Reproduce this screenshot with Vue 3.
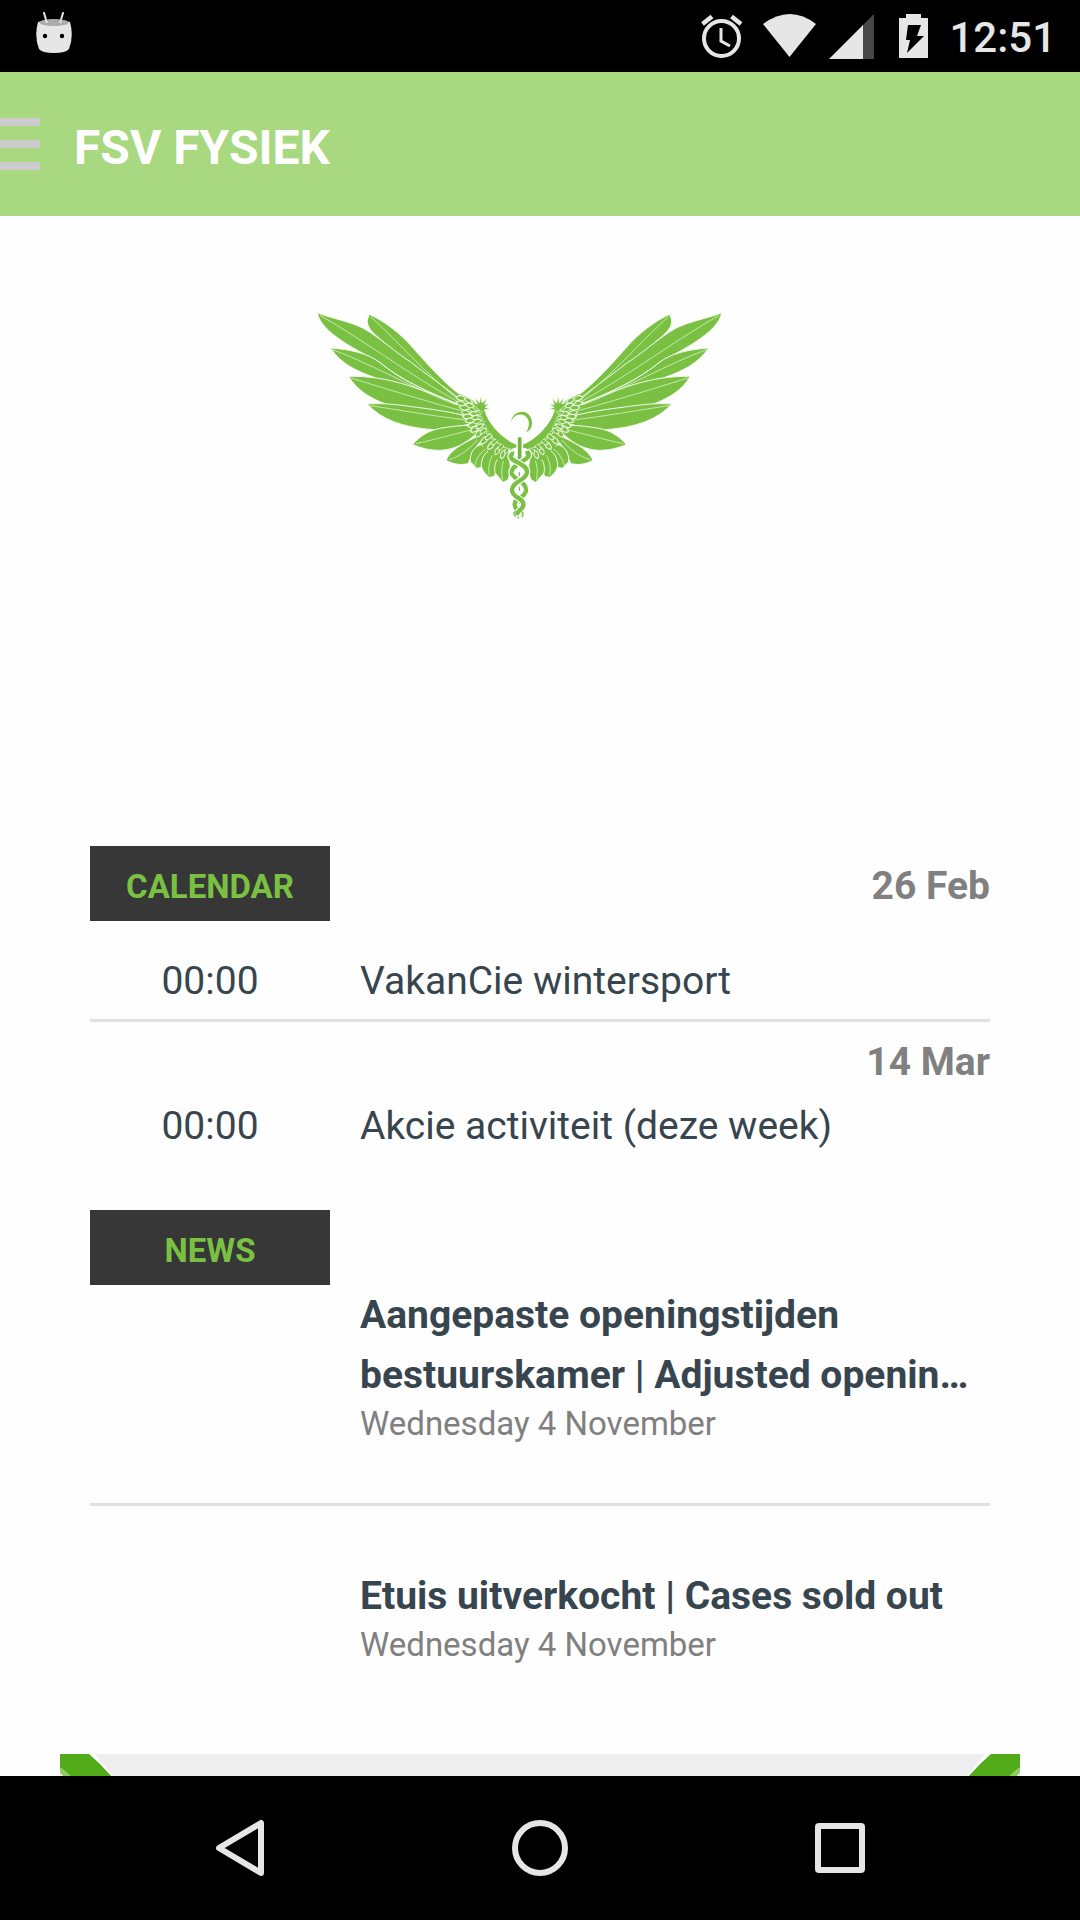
<template>
  <div class="screen">
    <header class="status-bar">
      <svg class="android-icon" width="36" height="42" viewBox="0 0 36 42" aria-hidden="true">
        <path d="M8 1l3 10M27 1l-3 10" stroke="#e6e6e6" stroke-width="2" stroke-linecap="round" />
        <path d="M2 10Q18 5 34 10Q38 24 33 37Q30 41 18 41Q6 41 3 37Q-2 24 2 10Z" fill="#e6e6e6" />
        <ellipse cx="18" cy="10.500" rx="14.500" ry="3.600" fill="#aaa" />
        <path d="M10 8l1 3M25 8l-1 3" stroke="#e6e6e6" stroke-width="2" />
        <circle cx="9" cy="24" r="2.200" />
        <circle cx="26" cy="24" r="2.200" />
      </svg>
      <div class="status-icons">
        <svg width="42" height="48" viewBox="0 0 42 48" fill="none" stroke="#e6e6e6" aria-hidden="true">
          <circle cx="20.500" cy="26.500" r="17.500" stroke-width="4" />
          <path d="M1.500 12L11 4.500M40 12L30.500 4.500" stroke-width="4.500" />
          <path d="M20 16v13l9 5" stroke-width="3" />
        </svg>
        <svg class="wifi" width="54" height="48" viewBox="0 0 54 48" aria-hidden="true">
          <path d="M0 12Q27-8 53 12L26.500 45Z" fill="#e6e6e6" />
        </svg>
        <svg class="signal" width="46" height="48" viewBox="0 0 46 48" aria-hidden="true">
          <path d="M45 2v45H33V14Z" fill="#484848" />
          <path d="M34 13v34H0Z" fill="#e6e6e6" />
        </svg>
        <svg class="battery" width="30" height="48" viewBox="0 0 30 48" aria-hidden="true">
          <path d="M7 2h15v4h7v40H0V6h7Z" fill="#e6e6e6" />
          <path d="M9 13h13l-4 11h7L8 41l3-13H7Z" fill="#000" />
        </svg>
        <span class="clock">12:51</span>
      </div>
    </header>

    <div class="toolbar">
      <button class="menu-button" type="button" aria-label="Menu">
        <span></span>
        <span></span>
        <span></span>
      </button>
      <h1 class="title">FSV FYSIEK</h1>
    </div>

    <main class="content">
      <div class="logo">
        <svg width="439" height="240" viewBox="0 0 1317 720" role="img" aria-label="FSV Fysiek">
          <defs>
            <g id="wing">
              <g fill="#7ac143" stroke="#f4fbee" stroke-width="3">
                <path d="M208 73C250 92 300 128 340 175C390 232 440 285 480 314L466 326C390 285 310 215 250 155C218 130 196 108 203 86Z" />
                <path d="M52 68C90 84 150 94 190 115C240 143 290 190 335 218C390 262 440 295 472 322L468 340C390 310 300 268 240 218C180 184 62 130 52 68Z" />
                <path d="M91 174C150 178 205 190 240 218C300 268 380 305 470 341L474 350C400 330 290 300 225 263C160 240 122 218 91 174Z" />
                <path d="M146 259C200 258 260 265 330 288C380 305 430 325 480 347L490 376C420 362 320 350 262 344C210 325 170 300 146 259Z" />
                <path d="M202 342C250 338 300 345 350 352C400 358 450 366 490 376L508 402C470 412 430 420 398 419C310 412 245 390 202 342Z" />
                <path d="M338 463C365 434 385 423 420 415C450 410 480 406 508 406L524 435C495 462 460 480 420 481C388 481 360 474 338 463Z" />
                <path d="M438 511C450 484 480 464 527 442L540 455C524 475 515 500 504 521C480 526 460 523 438 511Z" />
                <path d="M511 515C509 488 522 472 541 464L575 480C565 508 552 534 530 535Z" />
                <path d="M544 527C544 504 555 487 570 480L594 495C592 524 588 552 582 559L568 562C555 552 546 540 544 527Z" />
                <path d="M585 549C581 526 588 510 600 500L627 505C634 530 630 558 623 570L610 577Z" />
              </g>
              <path
                d="M212 80C300 160 370 245 468 323M60 76C190 150 330 255 468 332M98 179C210 220 350 300 470 345M153 264C270 300 400 340 484 362M211 347C300 360 410 380 500 390M347 461C400 450 470 430 514 420M447 509C480 500 510 475 532 450M524 528C528 505 544 485 558 476M568 555C562 530 572 500 584 488M608 568C602 545 606 520 614 506"
                fill="none"
                stroke="#e2f5d3"
                stroke-width="2.200"
              />
              <!-- covert feathers between the long ones and the inner edge -->
              <path d="M478 312L512 326L552 362Q578 430 652 468L652 505L600 515L560 480L532 450L505 402L486 370L466 326Z" fill="#7ac143" />
              <g fill="#7ac143" stroke="#edf9e3" stroke-width="3.400">
                <path
                  v-for="(c, i) in coverts"
                  :key="i"
                  d="M0 0C6-10 22-10 31 0C22 9 6 9 0 0Z"
                  :transform="`translate(${c[0]} ${c[1]}) rotate(${c[2]}) scale(${c[3]})`"
                />
              </g>
              <path d="M528 352l-16-16 20 6-8-20 15 17 2-20 6 20 13-14-6 19 14-3-13 11 14 5-17 3 6 12-16-8Z" fill="#7ac143" stroke="#f4fbee" stroke-width="2" />
              <path d="M553 362C567 412 604 452 660 467V485C600 472 561 432 546 372Z" fill="#7ac143" />
            </g>
          </defs>
          <use href="#wing" />
          <use href="#wing" transform="translate(1317 0) scale(-1 1)" />
          <path d="M633 395C639 357 692 354 696 396C697 411 690 422 678 427C691 409 691 380 667 374C650 370 638 382 633 395Z" fill="#7ac143" />
          <path d="M625 482Q659 462 693 482L680 560H638Z" fill="#fff" />
          <path d="M659 442V516M659 548v12M659 590v12M659 628v12" stroke="#fff" stroke-width="20" fill="none" />
          <path d="M659 442V518" stroke="#6fb63b" stroke-width="11" fill="none" />
          <path d="M658 545v14M658 590v12M658 628v14" stroke="#8faf9b" stroke-width="4" fill="none" />
          <g fill="none" stroke-linecap="round">
            <g v-for="(s, i) in snakes" :key="i">
              <path :d="s" stroke="#fff" stroke-width="20" />
              <path :d="s" stroke="#7ac143" stroke-width="13" />
            </g>
            <path d="M640 487Q628 505 646 514M678 487Q690 505 672 514" stroke="#7ac143" stroke-width="6" />
            <path d="M646 664q-8 8 0 14M664 664q9 7 2 16M655 681v3" stroke="#8dcb60" stroke-width="5" />
          </g>
        </svg>
      </div>

      <section class="calendar">
        <div v-for="(day, i) in days" :key="day.date" class="day">
          <div class="day-head">
            <h2 v-if="i === 0" class="tag">CALENDAR</h2>
            <span class="date">{{ day.date }}</span>
          </div>
          <div class="event">
            <span class="time">{{ day.time }}</span>
            <span class="name">{{ day.name }}</span>
          </div>
        </div>
      </section>

      <section class="news">
        <h2 class="tag">NEWS</h2>
        <article v-for="item in news" :key="item.title" class="news-item">
          <h3 class="news-title">{{ item.title }}</h3>
          <p class="news-date">{{ item.date }}</p>
        </article>
      </section>

      <div class="banner">
        <svg v-for="side in ['left', 'right']" :key="side" :class="side" width="60" height="60" viewBox="0 0 60 60" aria-hidden="true">
          <path d="M26 0h9L62 34 56 26Z" fill="#fff" />
          <path d="M0 0H29Q41 10 52 23L78 60H40L0 18Z" fill="#52ab18" />
          <path d="M0 15l10 9" stroke="#8fce62" stroke-width="4" />
        </svg>
      </div>
    </main>

    <nav class="nav-bar">
      <button type="button" aria-label="Back">
        <svg width="60" height="60" viewBox="0 0 60 60">
          <path d="M9 30L51 5V55Z" />
        </svg>
      </button>
      <button type="button" aria-label="Home">
        <svg width="60" height="60" viewBox="0 0 60 60">
          <circle cx="30" cy="30" r="25" />
        </svg>
      </button>
      <button type="button" aria-label="Recent apps">
        <svg width="60" height="60" viewBox="0 0 60 60">
          <rect x="8" y="8" width="44" height="44" rx="1" />
        </svg>
      </button>
    </nav>
  </div>
</template>

<script setup>
import { ref } from 'vue';

const days = ref([
  { date: '26 Feb', time: '00:00', name: 'VakanCie wintersport' },
  { date: '14 Mar', time: '00:00', name: 'Akcie activiteit (deze week)' }
]);

const news = ref([
  {
    title: 'Aangepaste openingstijden bestuurskamer | Adjusted openin…',
    date: 'Wednesday 4 November'
  },
  { title: 'Etuis uitverkocht | Cases sold out', date: 'Wednesday 4 November' }
]);

// x, y, rotation, scale of each small feather in the wing
const coverts = [
  [468, 322, 10, 1], [470, 337, 15, 0.9], [478, 352, 5, 1], [484, 366, 10, 0.9],
  [488, 380, 0, 1], [496, 394, -10, 1], [504, 410, -20, 1], [512, 425, -30, 1],
  [526, 440, -40, 1], [542, 462, -45, 1], [564, 478, -50, 1], [586, 494, -60, 0.9],
  [604, 506, -70, 0.9], [494, 325, 30, 0.9], [498, 342, 25, 0.9], [506, 356, 15, 0.8],
  [510, 370, 5, 0.9], [514, 384, -5, 0.9], [520, 398, -15, 0.8], [528, 414, -25, 0.8],
  [540, 430, -35, 0.8], [556, 448, -35, 0.8], [574, 464, -40, 0.8], [594, 480, -45, 0.8],
  [614, 490, -50, 0.7], [520, 348, 40, 0.7], [526, 366, 25, 0.6], [532, 382, 10, 0.6],
  [538, 398, -5, 0.6], [546, 412, -15, 0.6], [558, 430, -20, 0.6], [574, 446, -25, 0.6],
  [592, 460, -25, 0.6], [610, 472, -30, 0.6], [628, 484, -40, 0.6]
];

const snakes = [
  'M684 488C700 508 634 520 635 548C637 570 680 572 678 602C675 625 642 622 644 645C646 658 656 660 658 668',
  'M636 492C616 514 684 518 681 547C679 572 634 574 636 602C638 625 674 624 670 646C668 658 656 660 652 670'
];
</script>

<style>
body {
  margin: 0;
}
</style>

<style scoped>
.screen {
  height: 100vh;
  display: flex;
  flex-direction: column;
  background-color: #fefefe;
  color: #37454f;
  font-family: Roboto, 'Noto Sans', sans-serif;
}

h1, h2, h3, p {
  margin: 0;
}

button {
  padding: 0;
  border: none;
  background: none;
  cursor: pointer;
}

svg {
  display: block;
}

.status-bar {
  flex: none;
  height: 72px;
  box-sizing: border-box;
  padding: 0 24px 0 36px;
  display: flex;
  align-items: center;
  justify-content: space-between;
  background-color: #000;
}

.android-icon {
  margin-bottom: 6px;
}

.status-icons {
  display: flex;
  align-items: center;
}

.wifi {
  margin-left: 20px;
}

.signal {
  margin-left: 12px;
}

.battery {
  margin-left: 24px;
}

.clock {
  margin-left: 20px;
  padding-top: 4px;
  font-size: 42px;
  font-weight: 500;
  line-height: 48px;
  color: #e6e6e6;
}

.toolbar {
  flex: none;
  height: 144px;
  display: flex;
  align-items: center;
  gap: 34px;
  background-color: #a8d880;
}

.menu-button {
  width: 40px;
  display: flex;
  flex-direction: column;
  gap: 14px;
}

.menu-button span {
  height: 8px;
  background-color: #ccc;
}

.title {
  padding-top: 8px;
  font-size: 48px;
  line-height: 60px;
  color: #fff;
}

.content {
  flex: 1;
  min-height: 0;
  overflow: hidden;
}

.logo {
  height: 556px;
  padding: 74px 41px 0 0;
  display: flex;
  justify-content: center;
}

.calendar, .news {
  margin: 0 90px;
}

.day + .day {
  border-top: 3px solid #e0e0e0;
  padding-top: 10px;
}

.day-head {
  margin-bottom: 4px;
  display: flex;
  align-items: center;
}

.tag {
  width: 240px;
  box-sizing: border-box;
  padding-top: 6px;
  background-color: #373737;
  color: #7ac143;
  font-size: 33px;
  line-height: 69px;
  text-align: center;
}

.date {
  margin-left: auto;
  font-size: 39px;
  font-weight: bold;
  line-height: 60px;
  color: #808080;
}

.tag + .date {
  padding-top: 4px;
}

.event {
  display: grid;
  grid-template-columns: 240px 1fr;
  gap: 30px;
  font-size: 39px;
  line-height: 60px;
}

.day:first-child .event {
  padding: 26px 0 8px;
}

.time {
  text-align: center;
}

.news {
  margin-top: 54px;
}

.news-item {
  padding: 0 0 60px 270px;
}

.news-item + .news-item {
  border-top: 3px solid #e0e0e0;
  padding-top: 60px;
  padding-bottom: 90px;
}

.news-title {
  font-size: 39px;
  line-height: 60px;
}

.news-date {
  font-size: 33px;
  line-height: 38px;
  color: #808080;
}

.banner {
  height: 300px;
  margin: 0 60px;
  display: flex;
  justify-content: space-between;
  background-color: #eee;
}

.right {
  transform: scaleX(-1);
}

.nav-bar {
  flex: none;
  height: 144px;
  padding: 0 90px;
  display: grid;
  grid-template-columns: repeat(3, 1fr);
  background-color: #000;
}

.nav-bar button {
  display: flex;
  align-items: center;
  justify-content: center;
}

.nav-bar svg {
  fill: none;
  stroke: #e6e6e6;
  stroke-width: 6px;
  stroke-linejoin: round;
}
</style>
